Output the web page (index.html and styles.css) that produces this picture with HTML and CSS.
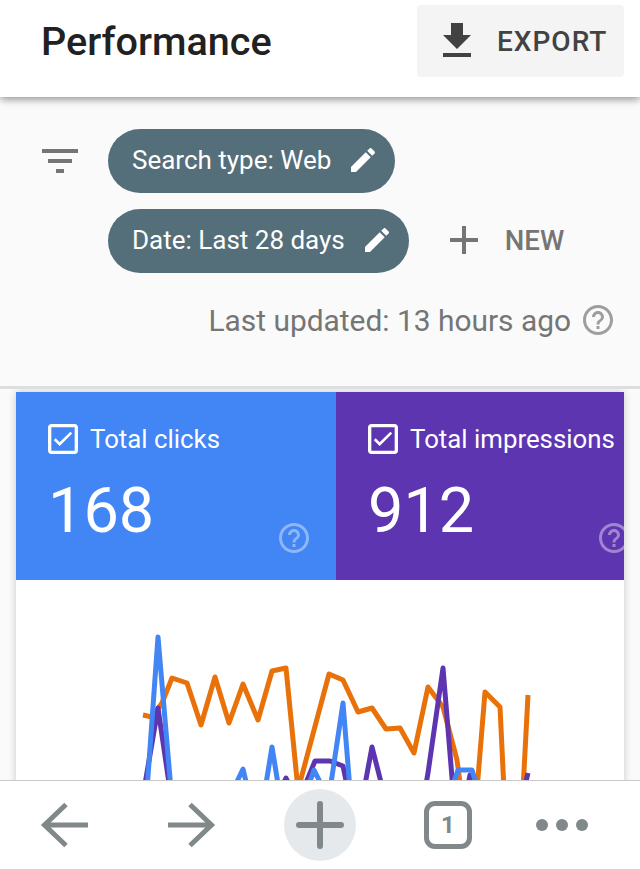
FILE: index.html
```html
<!DOCTYPE html>
<html lang="en">
<head>
    <meta charset="UTF-8">
    <meta name="viewport" content="width=device-width, initial-scale=1.0">
    <title>Performance</title>
    <link rel="stylesheet" href="styles.css">
</head>
<body>
    <div class="page">
        <header class="top-bar">
            <h1>Performance</h1>
            <button class="export-btn">
                <svg class="icon-48" viewBox="0 0 24 24"><path d="M19 9h-4V3H9v6H5l7 7 7-7zM5 18v2h14v-2H5z"/></svg>
                <span>EXPORT</span>
            </button>
        </header>

        <section class="filters">
            <div class="filter-rows">
                <svg class="icon-48 filter-icon" viewBox="0 0 24 24"><path d="M10 18h4v-2h-4v2zM3 6v2h18V6H3zm3 7h12v-2H6v2z"/></svg>
                <div class="chips">
                    <div class="chip-row">
                        <div class="chip">
                            <span>Search type: Web</span>
                            <svg class="icon-32" viewBox="0 0 24 24"><path d="M3 17.25V21h3.75L17.81 9.94l-3.75-3.75L3 17.25zM20.71 7.04c.39-.39.39-1.02 0-1.41l-2.34-2.34c-.39-.39-1.02-.39-1.41 0l-1.83 1.83 3.75 3.75 1.83-1.83z"/></svg>
                        </div>
                    </div>
                    <div class="chip-row">
                        <div class="chip">
                            <span>Date: Last 28 days</span>
                            <svg class="icon-32" viewBox="0 0 24 24"><path d="M3 17.25V21h3.75L17.81 9.94l-3.75-3.75L3 17.25zM20.71 7.04c.39-.39.39-1.02 0-1.41l-2.34-2.34c-.39-.39-1.02-.39-1.41 0l-1.83 1.83 3.75 3.75 1.83-1.83z"/></svg>
                        </div>
                        <button class="new-btn">
                            <svg class="icon-48" viewBox="0 0 24 24"><path d="M19 13h-6v6h-2v-6H5v-2h6V5h2v6h6v2z"/></svg>
                            <span>NEW</span>
                        </button>
                    </div>
                </div>
            </div>
            <div class="updated">
                <span>Last updated: 13 hours ago</span>
                <svg class="icon-36" viewBox="0 0 24 24"><path d="M11 18h2v-2h-2v2zm1-16C6.48 2 2 6.48 2 12s4.48 10 10 10 10-4.48 10-10S17.52 2 12 2zm0 18c-4.41 0-8-3.59-8-8s3.59-8 8-8 8 3.59 8 8-3.59 8-8 8zm0-14c-2.21 0-4 1.79-4 4h2c0-1.1.9-2 2-2s2 .9 2 2c0 2-3 1.75-3 5h2c0-2.25 3-2.5 3-5 0-2.21-1.79-4-4-4z"/></svg>
            </div>
        </section>

        <main class="content">
            <div class="card">
                <div class="tiles">
                    <div class="tile tile-clicks">
                        <div class="tile-inner">
                            <div class="tile-label">
                                <svg class="icon-40" viewBox="0 0 24 24"><path d="M19 5v14H5V5h14m0-2H5c-1.1 0-2 .9-2 2v14c0 1.1.9 2 2 2h14c1.1 0 2-.9 2-2V5c0-1.1-.9-2-2-2z"/><path d="M10 16.2l-3.5-3.5 1.1-1.1 2.4 2.4 6.4-6.4 1.1 1.1z"/></svg>
                                <span>Total clicks</span>
                            </div>
                            <div class="tile-value">168</div>
                            <svg class="icon-36 tile-help" viewBox="0 0 24 24"><path d="M11 18h2v-2h-2v2zm1-16C6.48 2 2 6.48 2 12s4.48 10 10 10 10-4.48 10-10S17.52 2 12 2zm0 18c-4.41 0-8-3.59-8-8s3.59-8 8-8 8 3.59 8 8-3.59 8-8 8zm0-14c-2.21 0-4 1.79-4 4h2c0-1.1.9-2 2-2s2 .9 2 2c0 2-3 1.75-3 5h2c0-2.25 3-2.5 3-5 0-2.21-1.79-4-4-4z"/></svg>
                        </div>
                    </div>
                    <div class="tile tile-impressions">
                        <div class="tile-inner">
                            <div class="tile-label">
                                <svg class="icon-40" viewBox="0 0 24 24"><path d="M19 5v14H5V5h14m0-2H5c-1.1 0-2 .9-2 2v14c0 1.1.9 2 2 2h14c1.1 0 2-.9 2-2V5c0-1.1-.9-2-2-2z"/><path d="M10 16.2l-3.5-3.5 1.1-1.1 2.4 2.4 6.4-6.4 1.1 1.1z"/></svg>
                                <span>Total impressions</span>
                            </div>
                            <div class="tile-value">912</div>
                            <svg class="icon-36 tile-help" viewBox="0 0 24 24"><path d="M11 18h2v-2h-2v2zm1-16C6.48 2 2 6.48 2 12s4.48 10 10 10 10-4.48 10-10S17.52 2 12 2zm0 18c-4.41 0-8-3.59-8-8s3.59-8 8-8 8 3.59 8 8-3.59 8-8 8zm0-14c-2.21 0-4 1.79-4 4h2c0-1.1.9-2 2-2s2 .9 2 2c0 2-3 1.75-3 5h2c0-2.25 3-2.5 3-5 0-2.21-1.79-4-4-4z"/></svg>
                        </div>
                    </div>
                </div>
                <!-- viewBox uses page coordinates so the points read off the screenshot directly -->
                <svg class="chart" viewBox="16 580 608 300">
                    <polyline class="line-orange" points="143,715 152,717 162,703 172,678 187,683 201,725 215,677 229,723 243,684 258,720 272,671 286,668 298,790 329,674 343,680 358,712 372,708 386,729 400,728 414,753 428,687 443,707 457,760 461,790 477,790 485,692 500,707 504,790 523,790 528,695"/>
                    <polyline class="line-purple" points="144,790 158,708 170,790 280,790 286,778 292,790 303,790 315,761 330,761 343,766 348,790 364,790 372,747 383,790 425,790 428,773 443,668 453,790 467,790 470,775 474,790 524,790 528,773"/>
                    <polyline class="line-blue" points="147,790 158,637 171,790 233,790 243,769 248,790 265,790 272,747 279,790 307,790 314,770 324,790 330,790 343,703 350,790 451,790 458,770 472,770 478,790"/>
                </svg>
            </div>
        </main>

        <nav class="browser-bar">
            <svg class="nav-icon" viewBox="0 0 48 48"><path d="M48 24H5M26 3.5L4.5 24 26 44.500"/></svg>
            <svg class="nav-icon" viewBox="0 0 48 48"><path d="M0 24h43M22 3.500L43.500 24 22 44.500"/></svg>
            <div class="nav-add">
                <svg class="nav-icon" viewBox="0 0 48 48"><path d="M3 24h42M24 3v42"/></svg>
            </div>
            <div class="nav-tabs">1</div>
            <div class="nav-more"><i></i><i></i><i></i></div>
        </nav>
    </div>
</body>
</html>
```

FILE: styles.css
```css
body {
    font-family: Roboto, "Liberation Sans", sans-serif;
    margin: 0;
    padding: 0;
}

.page {
    display: flex;
    flex-direction: column;
    height: 869px;
    overflow: hidden;
    background-color: #fafafa;
}

.icon-48 {
    width: 48px;
    height: 48px;
    flex: none;
    fill: currentColor;
}

.icon-40 {
    width: 40px;
    height: 40px;
    flex: none;
    fill: currentColor;
}

.icon-36 {
    width: 36px;
    height: 36px;
    flex: none;
    fill: currentColor;
}

.icon-32 {
    width: 32px;
    height: 32px;
    flex: none;
    fill: currentColor;
}

.top-bar {
    position: relative;
    z-index: 1;
    display: flex;
    align-items: flex-start;
    justify-content: space-between;
    height: 97px;
    box-sizing: border-box;
    padding: 5px 16px 0 41px;
    background-color: white;
    box-shadow: 0 2px 8px rgba(0, 0, 0, 0.45);
}

.top-bar h1 {
    margin: 0;
    font-size: 39.6px;
    font-weight: 500;
    line-height: 74px;
    color: #212121;
}

.export-btn {
    display: flex;
    align-items: center;
    gap: 16px;
    width: 207px;
    height: 72px;
    padding: 0 0 0 16px;
    border: none;
    border-radius: 4px;
    background-color: #f4f4f4;
    color: #424242;
    font-family: inherit;
    font-size: 28px;
    font-weight: 500;
    letter-spacing: 1px;
}

.filters {
    height: 292px;
    box-sizing: border-box;
    padding-top: 32px;
    border-bottom: 3px solid #dedede;
    color: #757575;
}

.filter-rows {
    display: flex;
    padding-left: 36px;
}

.filter-icon {
    margin: 8px 24px 0 0;
}

.chips {
    display: flex;
    flex-direction: column;
    gap: 16px;
}

.chip-row {
    display: flex;
    align-items: center;
}

.chip {
    display: flex;
    align-items: center;
    gap: 16px;
    height: 64px;
    padding: 0 16px 2px 24px;
    box-sizing: border-box;
    border-radius: 32px;
    background-color: #546e7a;
    color: white;
    font-size: 26px;
}

.new-btn {
    display: flex;
    align-items: center;
    gap: 17px;
    margin-left: 31px;
    padding: 0 0 2px;
    border: none;
    background: none;
    color: #757575;
    font-family: inherit;
    font-size: 27.6px;
    font-weight: 500;
}

.updated {
    display: flex;
    align-items: center;
    justify-content: flex-end;
    gap: 9px;
    margin-top: 29px;
    padding-right: 24px;
    font-size: 29.9px;
}

.updated svg {
    color: #9e9e9e;
}

.content {
    flex: 1;
    min-height: 0;
    overflow: hidden;
    padding: 3px 16px 0;
}

.card {
    background-color: white;
    box-shadow: 0 0 8px rgba(0, 0, 0, 0.2);
}

.tiles {
    display: flex;
    height: 188px;
    color: white;
}

.tile {
    overflow: hidden;
}

.tile-clicks {
    width: 320px;
    background-color: #4285f4;
}

.tile-impressions {
    width: 288px;
    background-color: #5e35b1;
}

.tile-inner {
    position: relative;
    width: 320px;
    height: 188px;
    box-sizing: border-box;
    padding: 27px 0 0 27px;
}

.tile-label {
    display: flex;
    align-items: center;
    gap: 7px;
    font-size: 25.8px;
}

.tile-value {
    margin: 13px 0 0 5px;
    font-size: 63px;
    line-height: 77px;
}

.tile-help {
    position: absolute;
    right: 24px;
    bottom: 24px;
    opacity: 0.4;
}

.chart {
    display: block;
    width: 608px;
    height: 300px;
}

.chart polyline {
    fill: none;
    stroke-width: 5;
    stroke-linejoin: round;
}

.line-orange {
    stroke: #e8710a;
}

.line-purple {
    stroke: #5e35b1;
}

.line-blue {
    stroke: #4285f4;
}

/* five equal slots, the tab bar of the browser */
.browser-bar {
    position: relative;
    z-index: 1;
    display: grid;
    grid-template-columns: repeat(5, 128px);
    align-items: center;
    justify-items: center;
    height: 89px;
    box-sizing: border-box;
    border-top: 1px solid #c8c8c8;
    background-color: white;
    color: #80888a;
}

.nav-icon {
    width: 48px;
    height: 48px;
    flex: none;
    fill: none;
    stroke: #80888a;
    stroke-width: 5;
}

.nav-add {
    display: flex;
    align-items: center;
    justify-content: center;
    width: 72px;
    height: 72px;
    border-radius: 50%;
    background-color: #e6e9eb;
}

.nav-add .nav-icon {
    stroke-width: 6;
    stroke-linecap: round;
}

.nav-tabs {
    width: 48px;
    height: 48px;
    box-sizing: border-box;
    border: 5px solid #80888a;
    border-radius: 11px;
    font-size: 24px;
    font-weight: 700;
    line-height: 38px;
    text-align: center;
}

.nav-more {
    display: flex;
    gap: 8px;
    margin-right: 28px;
}

.nav-more i {
    width: 12px;
    height: 12px;
    border-radius: 50%;
    background-color: #80888a;
}
```
